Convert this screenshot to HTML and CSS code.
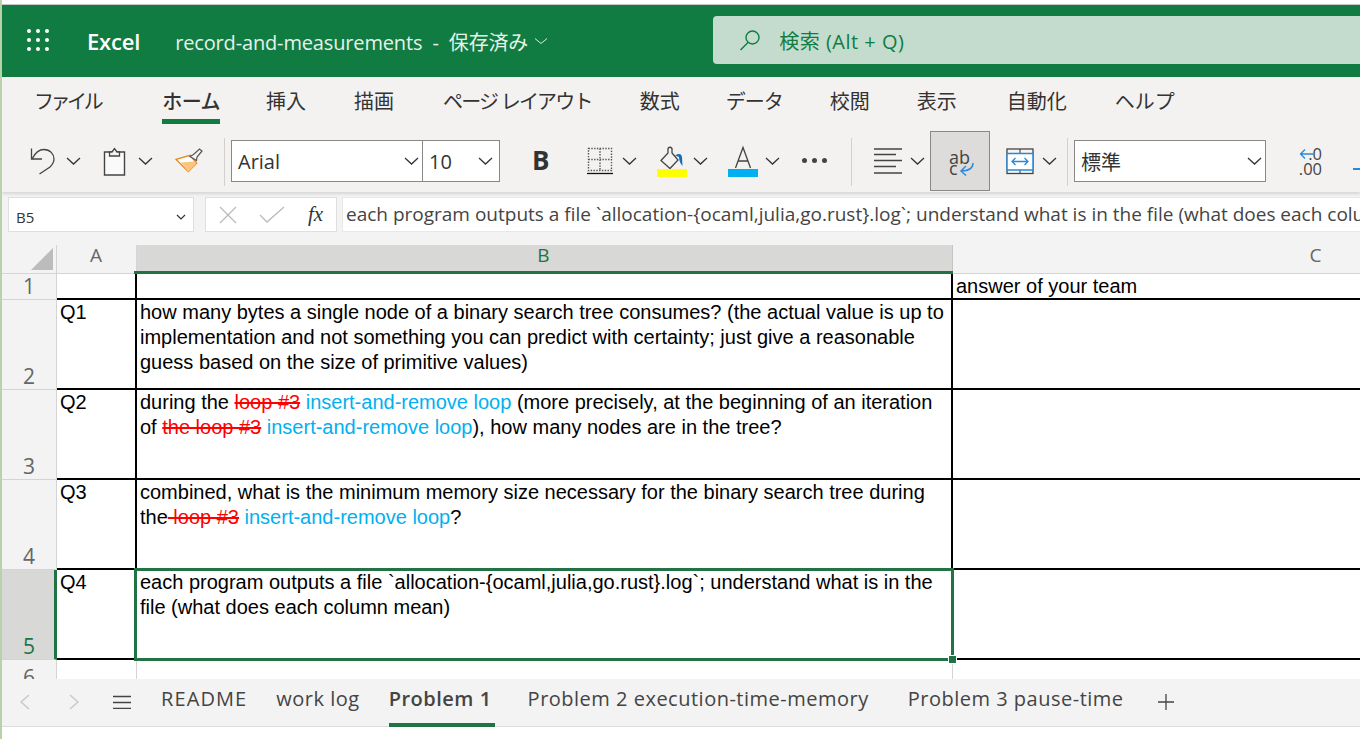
FILE: index.html
```html
<!DOCTYPE html>
<html lang="ja">
<head>
<meta charset="utf-8">
<title>Excel</title>
<link rel="stylesheet" href="styles.css">
</head>
<body>
<div class="app">
  <header class="titlebar">
    <svg class="waffle" width="24" height="24" viewBox="0 0 24 24"><g fill="#fff"><circle cx="3" cy="3" r="2"/><circle cx="12" cy="3" r="2"/><circle cx="21" cy="3" r="2"/><circle cx="3" cy="12" r="2"/><circle cx="12" cy="12" r="2"/><circle cx="21" cy="12" r="2"/><circle cx="3" cy="21" r="2"/><circle cx="12" cy="21" r="2"/><circle cx="21" cy="21" r="2"/></g></svg>
    <span class="brand">Excel</span>
    <span class="docname">record-and-measurements&nbsp; -&nbsp; 保存済み</span>
    <svg class="docchev" width="14" height="8" viewBox="0 0 14 8"><path d="M1 1.500 7 6.500 13 1.500" fill="none" stroke="#dcebe2" stroke-width="1"/></svg>
    <div class="search">
      <svg width="24" height="24" viewBox="0 0 24 24"><circle cx="14.500" cy="9.500" r="6.500" fill="none" stroke="#107c41" stroke-width="1.400"/><path d="M10 14.500 2.500 22" fill="none" stroke="#107c41" stroke-width="1.400"/></svg>
      <span>検索 (Alt + Q)</span>
    </div>
  </header>

  <nav class="tabs">
    <span class="tab t1">ファイル</span>
    <span class="tab t2 active">ホーム</span>
    <span class="tab t3">挿入</span>
    <span class="tab t4">描画</span>
    <span class="tab t5">ページ レイアウト</span>
    <span class="tab t6">数式</span>
    <span class="tab t7">データ</span>
    <span class="tab t8">校閲</span>
    <span class="tab t9">表示</span>
    <span class="tab t10">自動化</span>
    <span class="tab t11">ヘルプ</span>
  </nav>

  <div class="ribbon">
    <svg class="ic undo" width="26" height="32" viewBox="0 0 26 32"><path d="M2.500 4.500V15H13M3 15C6 9 10 5.500 15 5.500c6 0 10 4.500 10 9.500 0 3-2 6-4 8L10.500 30" fill="none" stroke="#444" stroke-width="1.300"/></svg>
    <svg class="chev c1" width="15" height="8" viewBox="0 0 15 8"><path d="M1 1l6.500 6L14 1" fill="none" stroke="#333" stroke-width="1.300"/></svg>
    <svg class="ic paste" width="24" height="32" viewBox="0 0 24 32"><path d="M1.500 8h20v23h-20z" fill="#fafafa" stroke="#444" stroke-width="1.400"/><path d="M6.500 12V8h2.500l2.500-3.500L14 8h2.500v4z" fill="#f3f2f1" stroke="#444" stroke-width="1.300"/></svg>
    <svg class="chev c2" width="15" height="8" viewBox="0 0 15 8"><path d="M1 1l6.500 6L14 1" fill="none" stroke="#333" stroke-width="1.300"/></svg>
    <svg class="ic brush" width="28" height="32" viewBox="0 0 28 32"><path d="M1 15.300 15 11.300l6.700 8-8.400 8.400z" fill="#fff" stroke="#e8861f" stroke-width="1.300"/><path d="M6 18.500 19 17.500l2.700 1.800-8.400 8.400z" fill="#fbc67c"/><path d="M15 12.500l3.500-2 6-5.500 2.500 2-5 6-.5 3.500z" fill="#f6f5f3" stroke="#555" stroke-width="1.200"/></svg>
    <span class="sep s1"></span>
    <div class="select font"><span>Arial</span><svg width="15" height="8" viewBox="0 0 15 8"><path d="M1 1l6.500 6L14 1" fill="none" stroke="#333" stroke-width="1.300"/></svg></div>
    <div class="select size"><span>10</span><svg width="15" height="8" viewBox="0 0 15 8"><path d="M1 1l6.500 6L14 1" fill="none" stroke="#333" stroke-width="1.300"/></svg></div>
    <b class="bold">B</b>
    <svg class="ic border" width="26" height="32" viewBox="0 0 26 32"><g fill="none" stroke="#555" stroke-width="1.400" stroke-dasharray="1.400 1.400"><path d="M1.500 4.500h23v22h-23zM1.500 15.500h23M13 4.500v22"/></g><path d="M0 29.500h26" stroke="#111" stroke-width="1.300"/></svg>
    <svg class="chev c3" width="15" height="8" viewBox="0 0 15 8"><path d="M1 1l6.500 6L14 1" fill="none" stroke="#333" stroke-width="1.300"/></svg>
    <svg class="ic fill" width="30" height="32" viewBox="0 0 30 32"><path d="M4 16.500 11 9V4.500q2-2.500 4 0V9l6 7-8 8.500z" fill="none" stroke="#444" stroke-width="1.300"/><path d="M18 11.500q6-3.500 7 1.500l.5 9q-3.500-4-3.500-9z" fill="#106ebe"/><rect y="25" width="30" height="8" fill="#ffff00"/></svg>
    <svg class="chev c4" width="15" height="8" viewBox="0 0 15 8"><path d="M1 1l6.500 6L14 1" fill="none" stroke="#333" stroke-width="1.300"/></svg>
    <svg class="ic color" width="30" height="32" viewBox="0 0 30 32"><path d="M7.500 24 15 3.500 22.500 24M10 17h10" fill="none" stroke="#444" stroke-width="1.300"/><rect y="25" width="30" height="8" fill="#00b0f0"/></svg>
    <svg class="chev c5" width="15" height="8" viewBox="0 0 15 8"><path d="M1 1l6.500 6L14 1" fill="none" stroke="#333" stroke-width="1.300"/></svg>
    <span class="more"><i></i><i></i><i></i></span>
    <span class="sep s2"></span>
    <svg class="ic align" width="28" height="32" viewBox="0 0 28 32"><path d="M0 5h28M0 10.500h22M0 16.500h28M0 22.500h22M0 29h28" stroke="#444" stroke-width="1.300"/></svg>
    <svg class="chev c6" width="15" height="8" viewBox="0 0 15 8"><path d="M1 1l6.500 6L14 1" fill="none" stroke="#333" stroke-width="1.300"/></svg>
    <div class="wrap"><span class="ab">ab</span><span class="c">c</span><svg width="15" height="14" viewBox="0 0 15 14"><path d="M14 1c0 5-4 8-12 8M7 4 2 9l5 4.500" fill="none" stroke="#2b88d8" stroke-width="1.400"/></svg></div>
    <svg class="ic merge" width="28" height="32" viewBox="0 0 28 32"><rect x="1" y="5" width="26" height="24.500" fill="#f6f5f3" stroke="#444" stroke-width="1.300"/><path d="M14 5v5M14 26v4" stroke="#444" stroke-width="1.100"/><rect x="1" y="9.500" width="26" height="16.500" fill="#fff" stroke="#2b88d8" stroke-width="1.500"/><path d="M6 17.500h16M9.500 14l-3.500 3.500 3.500 3.500M18.500 14l3.500 3.500-3.500 3.500" fill="none" stroke="#2b88d8" stroke-width="1.300"/></svg>
    <svg class="chev c7" width="15" height="8" viewBox="0 0 15 8"><path d="M1 1l6.500 6L14 1" fill="none" stroke="#333" stroke-width="1.300"/></svg>
    <span class="sep s3"></span>
    <div class="select numfmt"><span>標準</span><svg width="15" height="8" viewBox="0 0 15 8"><path d="M1 1l6.500 6L14 1" fill="none" stroke="#333" stroke-width="1.300"/></svg></div>
    <div class="dec"><span class="d1"><svg width="14" height="12" viewBox="0 0 14 12"><path d="M14 6H1.500M6 1.500 1.500 6 6 10.500" fill="none" stroke="#2b88d8" stroke-width="1.300"/></svg>.0</span><span>.00</span></div>
    <span class="dash"></span>
  </div>

  <div class="formula">
    <div class="namebox"><span>B5</span><svg width="10" height="6" viewBox="0 0 10 6"><path d="M1 1l4 4 4-4" fill="none" stroke="#333" stroke-width="1.200"/></svg></div>
    <div class="fxbox">
      <svg width="20" height="20" viewBox="0 0 20 20"><path d="M2 2l16 16M18 2 2 18" stroke="#bbb" stroke-width="1.300"/></svg>
      <svg width="26" height="18" viewBox="0 0 26 18"><path d="M1 9l7 7L25 1" fill="none" stroke="#bbb" stroke-width="1.300"/></svg>
      <i>fx</i>
    </div>
    <div class="fxinput">each program outputs a file `allocation-{ocaml,julia,go.rust}.log`; understand what is in the file (what does each column mean)</div>
  </div>

  <div class="sheet">
    <div class="corner"><span></span></div>
    <div class="colhead">A</div>
    <div class="colhead sel">B</div>
    <div class="colhead last">C</div>

    <div class="rowhead">1</div>
    <div class="cell a"></div>
    <div class="cell b"></div>
    <div class="cell ce">answer of your team</div>

    <div class="rowhead">2</div>
    <div class="cell a">Q1</div>
    <div class="cell b">how many bytes a single node of a binary search tree consumes? (the actual value is up to implementation and not something you can predict with certainty; just give a reasonable guess based on the size of primitive values)</div>
    <div class="cell ce"></div>

    <div class="rowhead">3</div>
    <div class="cell a">Q2</div>
    <div class="cell b">during the <s>loop #3</s> <em>insert-and-remove loop</em> (more precisely, at the beginning of an iteration of <s>the loop #3</s> <em>insert-and-remove loop</em>), how many nodes are in the tree?</div>
    <div class="cell ce"></div>

    <div class="rowhead">4</div>
    <div class="cell a">Q3</div>
    <div class="cell b">combined, what is the minimum memory size necessary for the binary search tree during the<s> loop #3</s> <em>insert-and-remove loop</em>?</div>
    <div class="cell ce"></div>

    <div class="rowhead cur">5</div>
    <div class="cell a">Q4</div>
    <div class="cell b active">each program outputs a file `allocation-{ocaml,julia,go.rust}.log`; understand what is in the file (what does each column mean)<span class="handle"></span></div>
    <div class="cell ce"></div>

    <div class="rowhead end">6</div>
    <div class="cell end"></div>
    <div class="cell end"></div>
    <div class="cell end nob"></div>
  </div>

  <footer class="sheetbar">
    <svg class="nav n1" width="12" height="16" viewBox="0 0 12 16"><path d="M10 1 2 8l8 7" fill="none" stroke="#c8c6c4" stroke-width="1.300"/></svg>
    <svg class="nav n2" width="12" height="16" viewBox="0 0 12 16"><path d="M2 1l8 7-8 7" fill="none" stroke="#c8c6c4" stroke-width="1.300"/></svg>
    <svg class="nav n3" width="20" height="14" viewBox="0 0 20 14"><path d="M1 1.500h18M1 7.500h18M1 13.500h18" stroke="#444" stroke-width="1.300"/></svg>
    <span class="st s-a">README</span>
    <span class="st s-b">work log</span>
    <span class="st s-c active">Problem 1</span>
    <span class="st s-d">Problem 2 execution-time-memory</span>
    <span class="st s-e">Problem 3 pause-time</span>
    <svg class="plus" width="18" height="18" viewBox="0 0 18 18"><path d="M9 1v16M1 9h16" stroke="#444" stroke-width="1.300"/></svg>
  </footer>
  <div class="bottom"></div>
</div>
</body>
</html>
```

FILE: styles.css
```css
* { box-sizing: border-box; }
html, body { margin: 0; height: 739px; overflow: hidden; background: #fff; }
body { font-family: "Open Sans", "Noto Sans CJK JP", sans-serif; color: #333; }
.app { width: 1360px; height: 739px; border-left: 2px solid #b9d3a8; padding-top: 5px; display: flex; flex-direction: column; overflow: hidden; background: linear-gradient(#fff 4px, #c8c8c8 4px, #c8c8c8 5px, #fff 5px); }

.titlebar { height: 72px; flex: none; background: #107c41; color: #fff; display: flex; align-items: center; }
.waffle { margin-left: 24px; margin-top: -2px; flex: none; }
.brand { margin-left: 37px; font-size: 22px; font-weight: 600; letter-spacing: -.2px; }
.docname { margin-left: 35px; font-size: 20px; letter-spacing: -.15px; color: #e6f2ea; white-space: nowrap; }
.docchev { margin-left: 6px; flex: none; }
.search { margin-left: 165px; margin-top: -2px; flex: 1; height: 48px; background: #c4dcce; border-radius: 4px 0 0 4px; display: flex; align-items: center; padding-left: 25px; color: #107c41; font-size: 20px; letter-spacing: .5px; gap: 17px; min-width: 0; white-space: nowrap; }

.tabs { height: 50px; flex: none; background: #f3f2f1; display: flex; align-items: flex-start; padding-left: 32px; padding-top: 13px; font-size: 20px; color: #333; }
.tab { height: 34px; white-space: nowrap; line-height: 24px; }
.tab.active { font-weight: 500; border-bottom: 5px solid #107c41; letter-spacing: -.5px; }
.t1 { letter-spacing: -3.450px; }
.t2 { margin-left: 62px; }
.t3 { margin-left: 46px; }
.t4 { margin-left: 48px; }
.t5 { margin-left: 49px; letter-spacing: -1.800px; }
.t6 { margin-left: 48px; }
.t7 { margin-left: 46px; letter-spacing: -1px; }
.t8 { margin-left: 47px; }
.t9 { margin-left: 47px; }
.t10 { margin-left: 50px; }
.t11 { margin-left: 48px; }

.ribbon { height: 65px; flex: none; background: #f3f2f1; display: flex; align-items: center; padding-left: 27px; box-shadow: 0 2px 3px rgba(0,0,0,.12); position: relative; overflow: hidden; z-index: 1; }
.ic, .chev { flex: none; overflow: visible; }
.chev { margin-top: 3px; }
.c1 { margin-left: 11px; }
.paste { margin-left: 22px; }
.c2 { margin-left: 11px; }
.brush { margin-left: 22px; }
.sep { width: 1px; height: 48px; background: #d2d0ce; flex: none; margin-top: 4px; }
.s1 { margin-left: 21px; }
.select { height: 42px; margin-top: 3px; border: 1px solid #8a8886; background: #fff; display: flex; align-items: center; justify-content: space-between; font-size: 20px; padding: 0 3px 0 6px; flex: none; color: #333; }
.font { width: 192px; margin-left: 6px; }
.size { width: 78px; margin-left: -1px; padding-right: 6px; }
.bold { margin-left: 32px; font-size: 26px; line-height: 1; color: #333; font-weight: 700; width: 20px; flex: none; }
.border { margin-left: 35px; }
.c3 { margin-left: 9px; }
.fill { margin-left: 20px; }
.c4 { margin-left: 6px; }
.color { margin-left: 20px; }
.c5 { margin-left: 7px; }
.more { margin-left: 22px; display: flex; gap: 5px; width: 25px; flex: none; margin-top: 2px; }
.more i { width: 5px; height: 5px; border-radius: 50%; background: #444; }
.s2 { margin-left: 24px; }
.align { margin-left: 22px; }
.c6 { margin-left: 8px; }
.wrap { margin-left: 5px; width: 60px; height: 60px; margin-top: 3px; background: #dedcda; border: 1px solid #8a8886; position: relative; flex: none; font-size: 18px; line-height: 1; color: #444; }
.wrap .ab { position: absolute; left: 18px; top: 16px; }
.wrap .c { position: absolute; left: 18px; top: 27px; }
.wrap svg { position: absolute; left: 28px; top: 30px; }
.merge { margin-left: 16px; }
.c7 { margin-left: 8px; }
.s3 { margin-left: 10px; }
.numfmt { width: 192px; margin-left: 6px; }
.dec { margin-left: 28px; display: flex; flex-direction: column; align-items: flex-end; font-size: 16.500px; line-height: 15px; color: #444; flex: none; width: 28px; margin-top: 3px; }
.d1 { display: flex; align-items: center; }
.d1 svg { margin-right: -5px; }
.dash { width: 12px; height: 2px; margin-left: 31px; margin-top: 18px; background: #2b88d8; flex: none; }

.formula { height: 53px; flex: none; background: #f3f3f3; display: flex; align-items: flex-start; padding: 5px 0 0 6px; overflow: hidden; }
.namebox { width: 186px; height: 35px; background: #fff; border: 1px solid #e1dfdd; display: flex; align-items: center; justify-content: space-between; padding: 4px 7px 0 7px; font-size: 15px; color: #333; flex: none; }
.fxbox { margin-left: 11px; width: 132px; height: 35px; background: #fff; border: 1px solid #e1dfdd; display: flex; align-items: center; padding-left: 12px; flex: none; }
.fxbox svg:nth-child(2) { margin-left: 21px; }
.fxbox i { margin-left: 23px; font-family: "Liberation Serif", serif; font-size: 21px; color: #333; font-weight: 400; }
.fxinput { margin-left: 5px; height: 35px; flex: none; width: 1100px; background: #fff; border: 1px solid #e9e8e7; border-right: 0; font-size: 19px; line-height: 32px; padding-left: 3px; color: #444; white-space: nowrap; overflow: hidden; }

.sheet { height: 434px; flex: none; display: grid; grid-template-columns: 55px 80px 816px 726px; grid-template-rows: 29px 26px 90px 90px 90px 90px 19px; background: #fff; overflow: hidden; font-family: "Liberation Sans", Arial, sans-serif; font-size: 20px; line-height: 25px; color: #000; }
.corner { background: #f3f3f3; border-right: 1px solid #d4d4d4; border-bottom: 1px solid #d4d4d4; position: relative; }
.corner span { position: absolute; right: 3px; bottom: 3px; width: 0; height: 0; border-left: 22px solid transparent; border-bottom: 22px solid #bcbcbc; }
.colhead { background: #f3f3f3; border-right: 1px solid #d4d4d4; border-bottom: 1px solid #d4d4d4; text-align: center; font-family: "Open Sans", sans-serif; font-size: 19px; line-height: 20px; color: #666; padding-right: 1px; position: relative; }
.colhead.sel { background: #d8d8d6; color: #217346; border-right-color: #c4c4c4; padding-right: 2px; }
.colhead.sel::after { content: ""; position: absolute; left: -3px; right: -2px; bottom: -1px; height: 3px; background: #217346; }
.colhead.last { border-right: 0; }
.rowhead { background: #f3f3f3; border-right: 1px solid #d4d4d4; border-bottom: 1px solid #d4d4d4; font-family: "Open Sans", sans-serif; font-size: 21px; line-height: 24px; color: #666; display: flex; align-items: flex-end; justify-content: center; padding-bottom: 1px; overflow: hidden; }
.rowhead.cur { background: #d8d8d6; color: #217346; border-right: 3px solid #217346; padding-left: 2px; }
.rowhead.end { align-items: flex-start; border-bottom: 0; padding: 5px 0 0; }
.cell { border-bottom: 2px solid #000; padding: 0 3px; position: relative; }
.cell.a, .cell.b { border-right: 2px solid #000; }
.cell.ce { padding: 0 4px 0 3px; }
.cell.b.active { z-index: 2; }
.cell.b.active::after { content: ""; position: absolute; left: -3px; top: -2px; right: -3px; bottom: -3px; border: 3px solid #217346; }
.handle { position: absolute; right: -5px; bottom: -5px; width: 7px; height: 7px; background: #217346; outline: 1px solid #fff; z-index: 3; }
.cell.end { border-bottom: 0; border-right: 1px solid #d4d4d4; }
.cell.nob { border-right: 0; }
s { color: #ff0000; text-decoration: line-through; }
em { color: #00b0f0; font-style: normal; }

.sheetbar { height: 48px; flex: none; background: #f3f3f3; border-bottom: 1px solid #dcdcdc; display: flex; align-items: flex-start; font-size: 20px; letter-spacing: .5px; color: #444; padding-left: 17px; padding-top: 7px; }
.nav { flex: none; margin-top: 8px; }
.n2 { margin-left: 37px; }
.n3 { margin-left: 32px; margin-top: 9px; }
.st { white-space: nowrap; height: 41px; line-height: 26px; }
.st.active { font-weight: 600; border-bottom: 4px solid #217346; padding-right: 3px; }
.s-a { margin-left: 29px; letter-spacing: 1.100px; }
.s-b { margin-left: 29px; }
.s-c { margin-left: 29px; }
.s-d { margin-left: 33px; }
.s-e { margin-left: 39px; }
.plus { margin-left: 33px; margin-top: 7px; flex: none; }
.bottom { flex: 1; background: #fff; }
```
